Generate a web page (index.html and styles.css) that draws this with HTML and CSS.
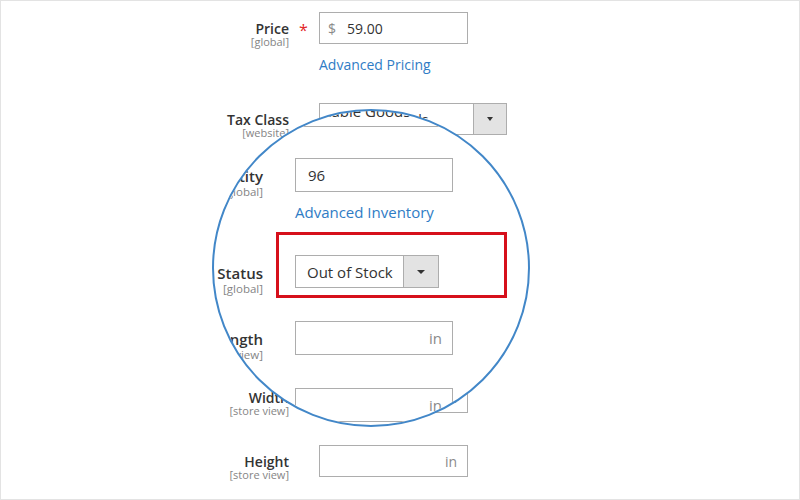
FILE: index.html
```html
<!DOCTYPE html>
<html>
<head>
<meta charset="utf-8">
<title>Product form</title>
<link rel="stylesheet" href="styles.css">
</head>
<body>
<div class="frame">
  <div class="form">
    <div class="row row-price">
      <div class="label"><span class="name">Price</span><span class="scope">[global]</span></div>
      <div class="req">*</div>
      <div class="control">
        <div class="input"><span class="addon">$</span><span class="value">59.00</span></div>
        <a class="link" href="#">Advanced Pricing</a>
      </div>
    </div>
    <div class="row row-tax">
      <div class="label"><span class="name">Tax Class</span><span class="scope">[website]</span></div>
      <div class="req"></div>
      <div class="control">
        <div class="select select-tax"><span class="select-text">Taxable Goods</span><span class="select-btn"><i class="caret"></i></span></div>
      </div>
    </div>
    <div class="row row-width">
      <div class="label"><span class="name">Width</span><span class="scope">[store view]</span></div>
      <div class="req"></div>
      <div class="control">
        <div class="input"><span class="unit">in</span></div>
      </div>
    </div>
    <div class="row row-height">
      <div class="label"><span class="name">Height</span><span class="scope">[store view]</span></div>
      <div class="req"></div>
      <div class="control">
        <div class="input"><span class="unit">in</span></div>
      </div>
    </div>
  </div>

  <div class="magnifier">
    <div class="mag-form">
      <div class="mrow">
        <div class="mlabel"><span class="mname">Tax Class</span><span class="mscope">[website]</span></div>
        <div class="mcontrol">
          <div class="mselect mselect-tax"><span class="mselect-text">Taxable Goods</span><span class="mselect-btn"><i class="mcaret"></i></span></div>
        </div>
      </div>
      <div class="mrow mrow-qty">
        <div class="mlabel"><span class="mname">Quantity</span><span class="mscope">[global]</span></div>
        <div class="mcontrol">
          <div class="minput"><span class="mvalue">96</span></div>
          <a class="mlink" href="#">Advanced Inventory</a>
        </div>
      </div>
      <div class="mrow mrow-stock">
        <div class="mlabel"><span class="mname">Stock Status</span><span class="mscope">[global]</span></div>
        <div class="mcontrol">
          <div class="mselect mselect-stock"><span class="mselect-text">Out of Stock</span><span class="mselect-btn"><i class="mcaret"></i></span></div>
        </div>
        <div class="highlight"></div>
      </div>
      <div class="mrow mrow-len">
        <div class="mlabel"><span class="mname">Length</span><span class="mscope">[store view]</span></div>
        <div class="mcontrol">
          <div class="minput"><span class="munit">in</span></div>
        </div>
      </div>
      <div class="mrow mrow-len">
        <div class="mlabel"><span class="mname">Width</span><span class="mscope">[store view]</span></div>
        <div class="mcontrol">
          <div class="minput"><span class="munit">in</span></div>
        </div>
      </div>
    </div>
  </div>
</div>
</body>
</html>
```

FILE: styles.css
```css
* { box-sizing: border-box; margin: 0; padding: 0; }
body { margin: 0; background: #fff; font-family: "Open Sans", "Liberation Sans", sans-serif; color: #333; }

.frame {
  position: relative;
  width: 800px;
  height: 500px;
  border: 1px solid #e3e3e3;
  padding-top: 11px;
  overflow: hidden;
  background: #fff;
}

/* ---------- regular form ---------- */
.row { display: grid; grid-template-columns: 288px 30px 1fr; align-items: start; }
.row-tax { margin-top: 29px; }
.row-width { margin-top: 246px; }
.row-height { margin-top: 32px; }

.label { display: flex; flex-direction: column; align-items: flex-end; padding-top: 8px; margin-bottom: -8px; text-align: right; }
.name { font-size: 14px; font-weight: 600; line-height: 18px; color: #333; }
.scope { font-size: 11px; line-height: 12px; margin-top: -2px; color: #858585; }
.req { color: #e22626; font-size: 16px; line-height: 18px; padding-top: 9px; padding-left: 10px; }

.input {
  display: flex; align-items: center;
  width: 149px; height: 32px;
  border: 1px solid #adadad;
  padding: 0 10px 0 8px;
  font-size: 14px;
}
.addon { color: #8a8a8a; }
.value { margin-left: 11px; color: #333; }
.unit { margin-left: auto; color: #8a8a8a; }

.link { display: block; margin-top: 12px; font-size: 14px; line-height: 18px; color: #2f7cc5; text-decoration: none; }

.select { display: flex; width: 188px; height: 32px; border: 1px solid #adadad; font-size: 14px; }
.select-text { flex: 1; display: flex; align-items: center; padding-left: 12px; white-space: nowrap; overflow: hidden; }
.select-btn { width: 33px; display: flex; align-items: center; justify-content: center; background: #e3e3e3; border-left: 1px solid #adadad; }
.caret { display: block; width: 0; height: 0; border-left: 3px solid transparent; border-right: 3px solid transparent; border-top: 4px solid #333; }

/* ---------- magnifier ---------- */
.magnifier {
  position: absolute;
  left: 211px; top: 108px;
  width: 318px; height: 318px;
  border: 2px solid #4287c8;
  border-radius: 50%;
  overflow: hidden;
  background: #fff;
}
.mag-form { position: absolute; left: -214px; top: -111px; width: 800px; padding-top: 94px; }

.mrow { position: relative; display: grid; grid-template-columns: 263px 32px 1fr; align-items: start; }
.mrow-qty { margin-top: 31px; }
.mrow-stock { margin-top: 33px; }
.mrow-len { margin-top: 33px; }

.mlabel { grid-column: 1; display: flex; flex-direction: column; align-items: flex-end; padding-top: 8px; margin-bottom: -10px; white-space: nowrap; }
.mname { font-size: 15px; font-weight: 600; line-height: 20px; color: #333; }
.mscope { font-size: 11.5px; line-height: 13px; margin-top: -1px; color: #858585; }
.mcontrol { grid-column: 3; }

.minput {
  display: flex; align-items: center;
  width: 158px; height: 34px;
  border: 1px solid #adadad;
  padding: 0 10px 0 12px;
  font-size: 15px;
}
.mvalue { color: #333; }
.munit { margin-left: auto; color: #8a8a8a; }

.mlink { display: block; margin-top: 10px; font-size: 15px; line-height: 20px; color: #2f7cc5; text-decoration: none; }

.mselect { display: flex; height: 33px; border: 1px solid #adadad; font-size: 15px; }
.mselect-tax { width: 199px; }
.mselect-stock { width: 144px; }
.mselect-text { flex: 1; display: flex; align-items: center; padding-left: 11px; white-space: nowrap; overflow: hidden; }
.mselect-btn { width: 35px; display: flex; align-items: center; justify-content: center; background: #e3e3e3; border-left: 1px solid #adadad; }
.mcaret { display: block; width: 0; height: 0; border-left: 4px solid transparent; border-right: 4px solid transparent; border-top: 4px solid #333; }

.highlight {
  position: absolute;
  left: 276px; top: -23px;
  width: 231px; height: 66px;
  border: 3px solid #d6101b;
}
```
